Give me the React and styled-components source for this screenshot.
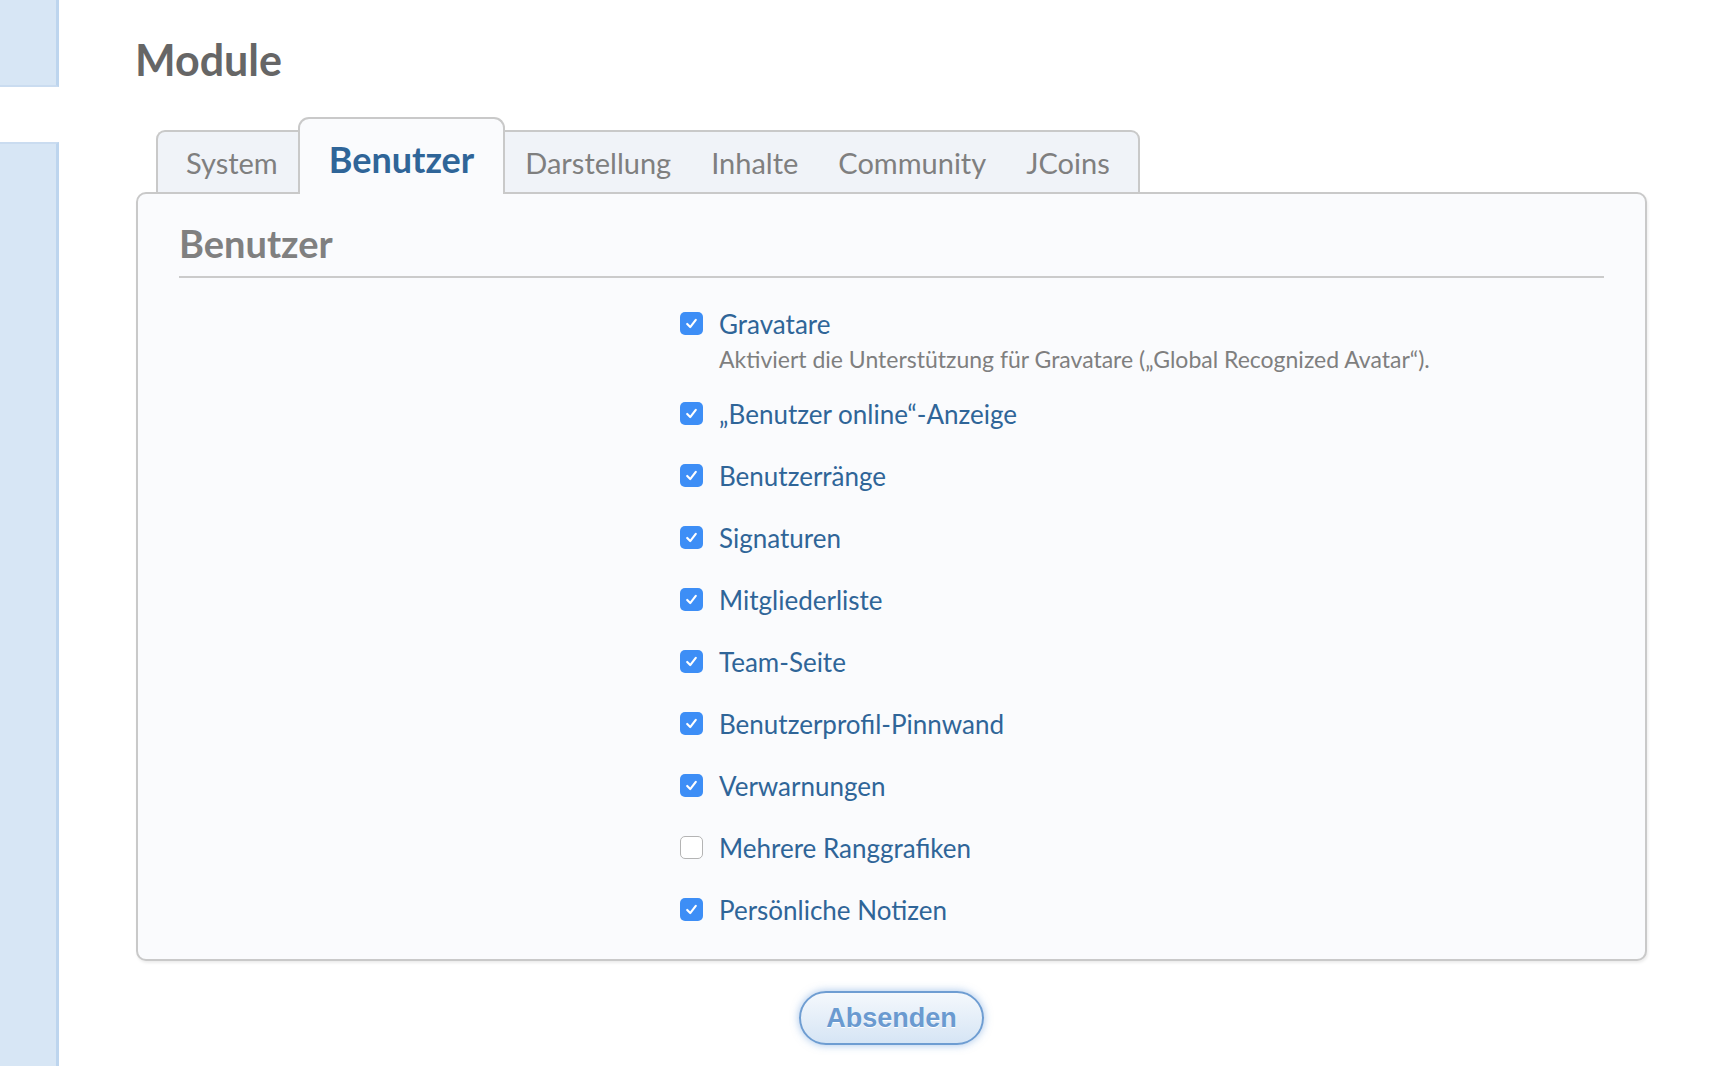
import React from 'react';
import styled, { createGlobalStyle } from 'styled-components';

const options = [
  { label: 'Gravatare', checked: true, description: 'Aktiviert die Unterstützung für Gravatare („Global Recognized Avatar“).' },
  { label: '„Benutzer online“-Anzeige', checked: true },
  { label: 'Benutzerränge', checked: true },
  { label: 'Signaturen', checked: true },
  { label: 'Mitgliederliste', checked: true },
  { label: 'Team-Seite', checked: true },
  { label: 'Benutzerprofil-Pinnwand', checked: true },
  { label: 'Verwarnungen', checked: true },
  { label: 'Mehrere Ranggrafiken', checked: false },
  { label: 'Persönliche Notizen', checked: true },
];

const GlobalStyle = createGlobalStyle`
  html, body {
    margin: 0;
    padding: 0;
    background: #fff;
  }
  body {
    font-family: Lato, "Open Sans", sans-serif;
  }
`;

const Page = styled.div`
  display: flex;
  min-height: 100vh;
`;

const Sidebar = styled.aside`
  width: 59px;
  flex-shrink: 0;
  display: flex;
  flex-direction: column;
  gap: 55px;
`;

const SideBlock = styled.div`
  background: #d7e6f5;
  border-right: 3px solid #bdd5ee;
  box-sizing: border-box;
  height: ${p => (p.$height ? `${p.$height}px` : 'auto')};
  flex: ${p => (p.$grow ? 1 : 'none')};
  border-bottom: ${p => (p.$grow ? 'none' : '2px solid #cadcf0')};
  border-top: ${p => (p.$grow ? '2px solid #cadcf0' : 'none')};
`;

const Main = styled.main`
  flex: 1;
  padding: 38px 79px 20px 77px;
`;

const Title = styled.h1`
  margin: 0 0 36px -1px;
  font-size: 43px;
  line-height: 43px;
  font-weight: 700;
  color: #666;
`;

const TabBar = styled.ul`
  display: flex;
  align-items: flex-end;
  margin: 0 0 -2px 20px;
  padding: 0;
  list-style: none;
  position: relative;
  z-index: 1;
`;

const TabGroup = styled.li`
  display: flex;
  align-items: center;
  height: 64px;
  box-sizing: border-box;
  background: #f0f3f8;
  border: 2px solid #c9c9c9;
  padding: ${p => (p.$side === 'left' ? '0 0 0 8px' : '0 8px 0 0')};
  border-radius: ${p => (p.$side === 'left' ? '9px 0 0 0' : '0 9px 0 0')};
  ${p => (p.$side === 'left' ? 'border-right: none;' : 'border-left: none;')}
`;

const TabLabel = styled.span`
  padding: 0 20px;
  font-size: 29px;
  color: #7f7f7f;
  white-space: nowrap;
`;

const ActiveTab = styled.li`
  display: flex;
  align-items: center;
  justify-content: center;
  height: 77px;
  box-sizing: border-box;
  padding: 4px 29px 0;
  background: #fafbfd;
  border: 2px solid #c9c9c9;
  border-bottom: none;
  border-radius: 11px 11px 0 0;
  font-size: 36px;
  font-weight: 700;
  color: #2f6598;
`;

const Panel = styled.section`
  background: #fafbfd;
  border: 2px solid #c9c9c9;
  border-radius: 10px;
  box-shadow: 1px 2px 3px rgba(0, 0, 0, 0.08);
  padding: 31px 41px 38px 41px;
`;

const SectionTitle = styled.h2`
  margin: 0;
  padding-bottom: 14px;
  border-bottom: 2px solid #cbcbcb;
  font-size: 38px;
  line-height: 37px;
  font-weight: 700;
  color: #808080;
`;

const OptionList = styled.div`
  display: flex;
  flex-direction: column;
  gap: 39px;
  margin: 34px 0 0 501px;
`;

const Option = styled.label`
  display: grid;
  grid-template-columns: 23px 1fr;
  align-items: center;
  column-gap: 16px;
  cursor: pointer;
`;

const Box = styled.span`
  width: 23px;
  height: 23px;
  box-sizing: border-box;
  border-radius: 5px;
  display: flex;
  align-items: center;
  justify-content: center;
  background: ${p => (p.$checked ? '#3d8ef6' : '#fff')};
  border: ${p => (p.$checked ? 'none' : '1.5px solid #b4b4b4')};
`;

const OptionLabel = styled.span`
  font-size: 26px;
  line-height: 22px;
  color: #2f6598;
`;

const Description = styled.p`
  grid-column: 2;
  margin: 12px 0 -8px;
  font-size: 23px;
  line-height: 24px;
  color: #7f7f7f;
`;

const Actions = styled.div`
  display: flex;
  justify-content: center;
  margin-top: 30px;
`;

const SubmitButton = styled.button`
  width: 185px;
  height: 54px;
  border-radius: 27px;
  border: 2px solid #6e9dd2;
  background: linear-gradient(#f4f8fc, #d6e5f5);
  box-shadow: 0 0 8px rgba(90, 145, 215, 0.55);
  font-family: "Liberation Sans", Arial, sans-serif;
  font-size: 27px;
  font-weight: 700;
  color: #6a9ad0;
  text-shadow: 0 1px 0 #fff;
  cursor: pointer;
`;

const Check = () => (
  <svg width="15" height="15" viewBox="0 0 14 14">
    <path d="M3 7.4 L5.8 10.3 L11 3.6" fill="none" stroke="#fff" strokeWidth="2" strokeLinecap="round" strokeLinejoin="round" />
  </svg>
);

const App = () => (
  <>
    <GlobalStyle />
    <Page>
      <Sidebar>
        <SideBlock $height={87} />
        <SideBlock $grow />
      </Sidebar>
      <Main>
        <Title>Module</Title>
        <TabBar>
          <TabGroup $side="left">
            <TabLabel>System</TabLabel>
          </TabGroup>
          <ActiveTab>Benutzer</ActiveTab>
          <TabGroup $side="right">
            <TabLabel>Darstellung</TabLabel>
            <TabLabel>Inhalte</TabLabel>
            <TabLabel>Community</TabLabel>
            <TabLabel>JCoins</TabLabel>
          </TabGroup>
        </TabBar>
        <Panel>
          <SectionTitle>Benutzer</SectionTitle>
          <OptionList>
            {options.map(opt => (
              <Option key={opt.label}>
                <Box $checked={opt.checked}>{opt.checked && <Check />}</Box>
                <OptionLabel>{opt.label}</OptionLabel>
                {opt.description && <Description>{opt.description}</Description>}
              </Option>
            ))}
          </OptionList>
        </Panel>
        <Actions>
          <SubmitButton type="submit">Absenden</SubmitButton>
        </Actions>
      </Main>
    </Page>
  </>
);

export default App;
